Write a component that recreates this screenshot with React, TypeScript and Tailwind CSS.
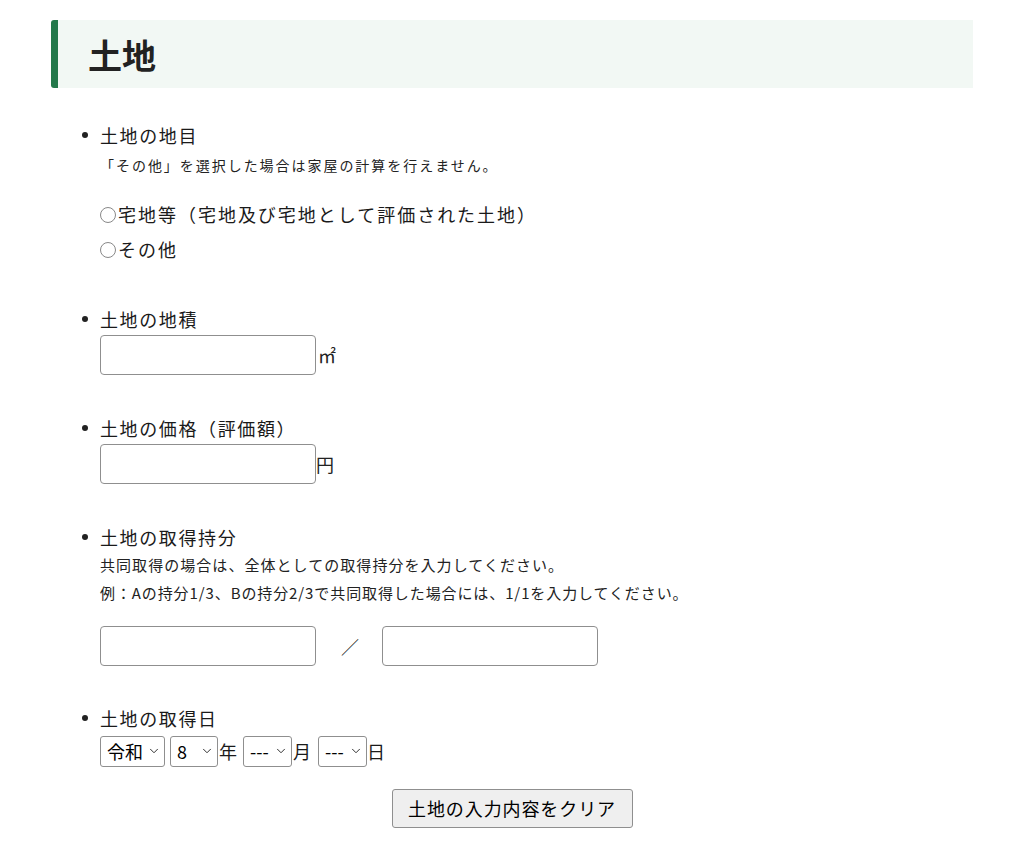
import { ChevronDown } from 'lucide-react';

const font = { fontFamily: '"Noto Sans CJK JP", "Noto Sans", sans-serif' };

function Bullet({ children }: { children: React.ReactNode }) {
    return (
        <div className="flex items-center h-[28px]">
            <span className="w-[6px] h-[6px] rounded-full bg-[#222] ml-[31px] mr-[12px]" />
            <span className="text-[18px] tracking-[0.09em] text-[#1a1a1a]">{children}</span>
        </div>
    );
}

function TextBox() {
    return (
        <input
            type="text"
            className="w-[216px] h-[40px] border border-[#8f8f8f] rounded-[4px] bg-white px-2 text-[18px] outline-none"
        />
    );
}

function Select({ value, width, options }: { value: string; width: string; options: string[] }) {
    return (
        <span className={`relative inline-flex ${width} h-[31px]`}>
            <select
                defaultValue={value}
                className="appearance-none w-full h-full border border-[#8f8f8f] rounded-[3px] bg-white pl-[6px] text-[18px] text-black outline-none"
            >
                {options.map(o => (
                    <option key={o} value={o}>{o}</option>
                ))}
            </select>
            <ChevronDown
                size={14}
                strokeWidth={1.6}
                className="absolute right-[4px] top-[8px] text-[#222] pointer-events-none"
            />
        </span>
    );
}

function Radio({ label }: { label: string }) {
    return (
        <label className="flex items-center h-[35px] text-[18px] tracking-[0.11em] text-[#1a1a1a]">
            <span className="w-[16px] h-[16px] rounded-full border border-[#888] mr-[2px]" />
            {label}
        </label>
    );
}

export default function App() {
    const months = ['---', '1', '2', '3', '4', '5', '6', '7', '8', '9', '10', '11', '12'];
    return (
        <div className="min-h-screen bg-white pt-[20px]" style={font}>
            <div className="mx-[51px]">
                {/* Heading */}
                <div className="h-[68px] flex items-center bg-[#f2f8f4] border-l-[7px] border-[#23784a] rounded-l-[3px]">
                    <h2 className="ml-[30px] text-[34px] font-bold text-[#222]">土地</h2>
                </div>

                <div className="mt-[33px]">
                    {/* 地目 */}
                    <Bullet>土地の地目</Bullet>
                    <div className="pl-[49px]">
                        <p className="mt-[4px] h-[24px] leading-[24px] text-[14px] tracking-[0.14em] text-[#222]">
                            「その他」を選択した場合は家屋の計算を行えません。
                        </p>
                        <div className="mt-[20px]">
                            <Radio label="宅地等（宅地及び宅地として評価された土地）" />
                            <Radio label="その他" />
                        </div>
                    </div>

                    {/* 地積 */}
                    <div className="mt-[38px]">
                        <Bullet>土地の地積</Bullet>
                        <div className="pl-[49px] mt-[2px] flex items-center">
                            <TextBox />
                            <span className="ml-[2px] text-[18px] text-[#222]">㎡</span>
                        </div>
                    </div>

                    {/* 価格 */}
                    <div className="mt-[39px]">
                        <Bullet>土地の価格（評価額）</Bullet>
                        <div className="pl-[49px] mt-[2px] flex items-center">
                            <TextBox />
                            <span className="text-[18px] text-[#222]">円</span>
                        </div>
                    </div>

                    {/* 持分 */}
                    <div className="mt-[39px]">
                        <Bullet>土地の取得持分</Bullet>
                        <div className="pl-[49px] text-[15px] tracking-[0.07em] leading-[28px] text-[#222]">
                            <p>共同取得の場合は、全体としての取得持分を入力してください。</p>
                            <p className="tracking-[0.06em]">例：Aの持分1/3、Bの持分2/3で共同取得した場合には、1/1を入力してください。</p>
                            <div className="mt-[19px] flex items-center">
                                <TextBox />
                                <span className="ml-[25px] mr-[22px] text-[18px] text-[#222]">／</span>
                                <TextBox />
                            </div>
                        </div>
                    </div>

                    {/* 取得日 */}
                    <div className="mt-[38px]">
                        <Bullet>土地の取得日</Bullet>
                        <div className="pl-[49px] mt-[4px] flex items-center text-[18px] text-[#1a1a1a]">
                            <Select value="令和" width="w-[65px]" options={['令和', '平成', '昭和']} />
                            <span className="w-[5px]" />
                            <Select value="8" width="w-[48px]" options={['1', '2', '3', '4', '5', '6', '7', '8']} />
                            <span className="ml-[1px] mr-[6px]">年</span>
                            <Select value="---" width="w-[49px]" options={months} />
                            <span className="ml-[1px] mr-[7px]">月</span>
                            <Select value="---" width="w-[49px]" options={months} />
                            <span>日</span>
                        </div>
                    </div>

                    <div className="mt-[22px] flex justify-center">
                        <button
                            type="button"
                            className="w-[241px] h-[39px] border border-[#8f8f8f] rounded-[3px] bg-[#efefef] text-[18px] tracking-[0.05em] text-black"
                        >
                            土地の入力内容をクリア
                        </button>
                    </div>
                </div>
            </div>
        </div>
    );
}
